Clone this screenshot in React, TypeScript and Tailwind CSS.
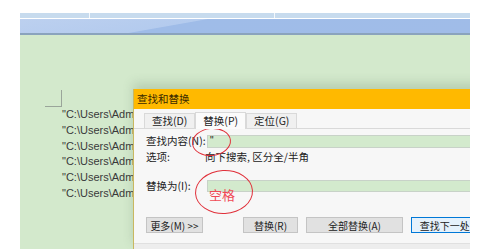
import React from 'react'

const cjk = { fontFamily: '"Noto Sans CJK SC", "Liberation Sans", sans-serif' }

const paths = Array.from({ length: 6 }, () => '"C:\\Users\\Admin')

function Tab({ label, active }: { label: string; active?: boolean }) {
  return (
    <div
      className={`flex items-center px-[7px] border border-b-0 border-[#d9d9d9] text-[10.5px] text-[#222] ${
        active ? 'h-[17px] bg-[#fbfbfb] -mb-px z-10' : 'h-[15px] bg-[#f0f0f0]'
      }`}
    >
      {label}
    </div>
  )
}

function Btn({ label, primary, w }: { label: string; primary?: boolean; w: string }) {
  return (
    <div
      className={`h-[16px] ${w} flex items-center justify-center whitespace-nowrap overflow-hidden text-[10px] text-[#222] border ${
        primary ? 'border-[#0078d7] bg-[#e5f1fb]' : 'border-[#c4c4c4] bg-[#e1e1e1]'
      }`}
    >
      {label}
    </div>
  )
}

export default function App() {
  return (
    <div className="w-[480px] h-[249px] bg-white pt-[13px] pl-[20px] pr-[10px] flex flex-col overflow-hidden" style={cjk}>
      {/* ribbon strips */}
      <div className="h-[5px] bg-[#c7dbee] flex">
        <div className="w-[70px] border-r border-white/80" />
        <div className="w-[185px] border-r border-white/80" />
      </div>
      <div className="h-px bg-white/80" />
      <div className="h-[14px] bg-[linear-gradient(170deg,#bcd0ef_0%,#b4cbee_35%,#9fbce8_36%,#a0bce8_100%)]" />
      <div className="h-[2px] bg-[#8aa3bd]" />

      {/* document */}
      <div className="flex-1 relative bg-[#d3e9cc] overflow-hidden">
        <div className="pl-[25px] pt-[55px]">
          <div className="absolute left-[25px] top-[55px] w-[17px] h-[17px] border-r border-b border-[#9aa59a]" />
          <div className="pl-[17px] pt-[19px] flex flex-col gap-[4px] text-[11px] leading-[11.8px] text-[#3a3a3a]" style={{ fontFamily: '"Liberation Sans", sans-serif' }}>
            {paths.map((p, i) => (
              <div key={i}>{p}</div>
            ))}
          </div>
        </div>

        {/* dialog */}
        <div className="absolute left-[113px] top-[54px] w-[400px] h-[160px] flex flex-col shadow-[0_-6px_10px_rgba(60,90,60,0.18)] border-l border-[#c9b860]">
          <div className="h-[20px] bg-[#ffb900] flex items-center pl-[3px] text-[10.5px] text-[#3a2a00]">查找和替换</div>
          <div className="flex-1 bg-[#f7f7f7] flex flex-col pl-[9px]">
            <div className="flex items-end pt-[3px] pl-[1px]">
              <Tab label="查找(D)" />
              <Tab label="替换(P)" active />
              <Tab label="定位(G)" />
            </div>
            <div className="border-t border-[#d9d9d9] -ml-[9px] pl-[12px] pt-[5px] flex flex-col">
              <div className="flex items-center h-[14px] text-[10.5px] text-[#222]">
                <div className="w-[61px]">查找内容(N):</div>
                <div className="flex-1 h-[13px] bg-[#d3eacd] border border-[#c8d2c8] text-[10px] leading-[10px] pl-[2px]" style={{ fontFamily: '"Liberation Sans", sans-serif' }}>"</div>
              </div>
              <div className="flex items-center h-[14px] mt-[2px] text-[10.5px] text-[#222]">
                <div className="w-[59px]">选项:</div>
                <div>向下搜索, 区分全/半角</div>
              </div>
              <div className="flex items-center h-[14px] mt-[15px] text-[10.5px] text-[#222]">
                <div className="w-[61px]">替换为(I):</div>
                <div className="flex-1 h-[12px] bg-[#d3eacd] border border-[#c8d2c8]" />
              </div>
              <div className="flex items-center mt-[24px]">
                <Btn label="更多(M) >>" w="w-[57px]" />
                <div className="ml-[40px]"><Btn label="替换(R)" w="w-[55px]" /></div>
                <div className="ml-[8px]"><Btn label="全部替换(A)" w="w-[97px]" /></div>
                <div className="ml-[8px]"><Btn label="查找下一处(F)" w="w-[80px]" primary /></div>
              </div>
            </div>
          </div>
          <div className="h-[6px] bg-[#ededed] border-t border-[#e0e0e0]" />
        </div>

        {/* red annotations */}
        <div className="absolute left-[172px] top-[93px] w-[39px] h-[28px] rounded-[50%] border-[1.5px] border-[#e0303a] -rotate-6" />
        <div className="absolute left-[175px] top-[135px] w-[58px] h-[44px] rounded-[50%] border-[1.5px] border-[#e0303a] -rotate-3" />
        <div className="absolute left-[189px] top-[153px] text-[13px] leading-[14px] text-[#f04a55]">空格</div>
      </div>
    </div>
  )
}
